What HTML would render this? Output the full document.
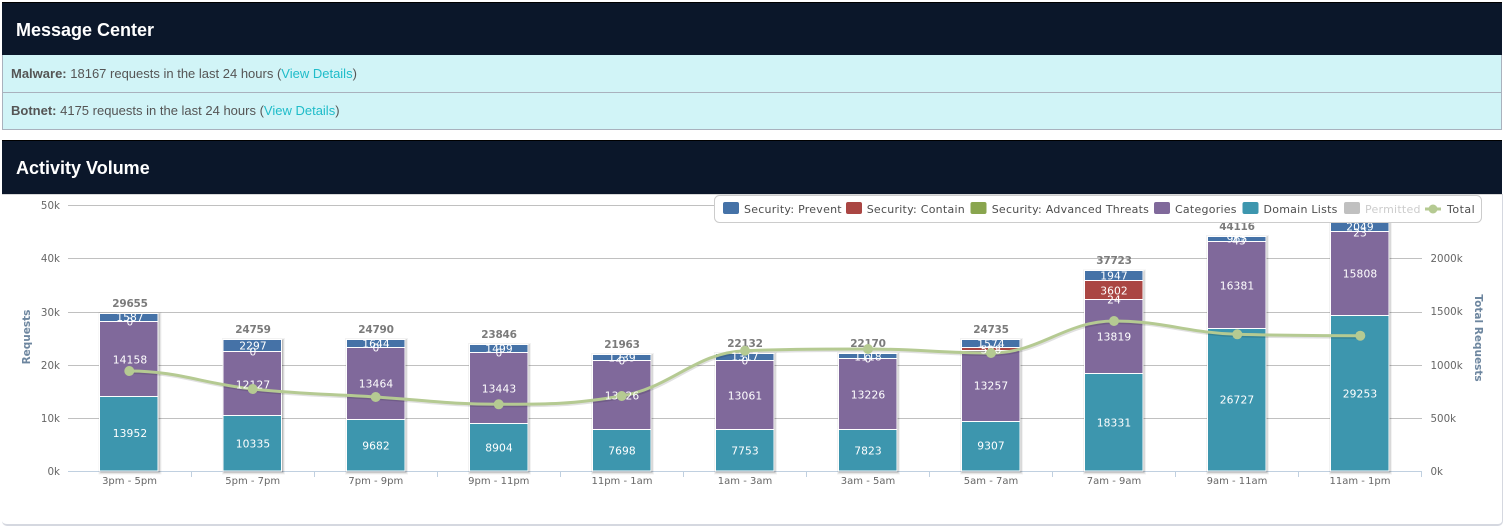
<!DOCTYPE html>
<html lang="en"><head><meta charset="utf-8"><title>Dashboard</title>
<style>
html,body{margin:0;padding:0;background:#fff;width:1504px;height:531px;overflow:hidden;font-family:"Liberation Sans",Arial,sans-serif}
.a{position:absolute;box-sizing:border-box}
.head{left:2px;width:1500px;background:#0b172a;color:#fff;font-weight:bold;font-size:18px;padding-left:14px;border-top:1px solid #000}
.row{left:2px;width:1500px;background:#d1f4f7;color:#555;font-size:13px;padding-left:8px;border-left:1px solid #a9b1bd;border-right:1px solid #a9b1bd;border-bottom:1px solid #a9b1bd}
.row a{color:#1fbcc9;text-decoration:none}
svg{position:absolute;left:0;top:0}
svg text{font-family:"DejaVu Sans",sans-serif}
.d text{fill:#fff;font-size:10.7px;letter-spacing:.1px;text-anchor:middle;dominant-baseline:central}
.t text{fill:#7b7b7b;font-size:10.5px;letter-spacing:-.2px;font-weight:bold;text-anchor:middle;dominant-baseline:central}
.x text{fill:#666;font-size:10px;text-anchor:middle;dominant-baseline:central}
.yl text{fill:#666;font-size:10.3px;text-anchor:end;dominant-baseline:central}
.yr text{fill:#666;font-size:10.3px;dominant-baseline:central}
.l text{fill:#4d4d4d;font-size:11px;letter-spacing:.25px;dominant-baseline:central}
.s rect{stroke:#fff;stroke-width:1}
</style></head><body>
<div class="a head" style="top:2px;height:53px;line-height:55px">Message Center</div>
<div class="a row" style="top:55px;height:38px;line-height:37px"><b>Malware:</b> 18167 requests in the last 24 hours (<a href="#">View Details</a>)</div>
<div class="a row" style="top:93px;height:37px;line-height:35px"><b>Botnet:</b> 4175 requests in the last 24 hours (<a href="#">View Details</a>)</div>
<div class="a" style="left:2px;top:194px;width:1501px;height:332px;border-right:1px solid #d5d8e0;border-bottom:2px solid #d5d8e0;border-radius:0 0 5px 5px;border-top:1px solid #d8d8d8"></div>
<div class="a head" style="top:140px;height:54px;line-height:54px">Activity Volume</div>
<svg width="1504" height="531" viewBox="0 0 1504 531" xmlns="http://www.w3.org/2000/svg">
<g stroke="#c0c0c0" stroke-width="1" fill="none">
<path d="M68 205.5H1422M68 258.5H1422M68 312.5H1422M68 365.5H1422M68 418.5H1422"/>
</g>
<path d="M68 471.5H1422M191.500 471V477M314.500 471V477M437.500 471V477M560.500 471V477M683.500 471V477M806.500 471V477M929.500 471V477M1052.500 471V477M1175.500 471V477M1298.500 471V477M1421.500 471V477" stroke="#c0d0e0" fill="none"/>
<g class="yl" transform="translate(0 .8)"><text x="60" y="205">50k</text><text x="60" y="258">40k</text><text x="60" y="312">30k</text><text x="60" y="365">20k</text><text x="60" y="418">10k</text><text x="60" y="471">0k</text></g>
<g class="yr" transform="translate(0 .8)"><text x="1430.500" y="258">2000k</text><text x="1430.500" y="311">1500k</text><text x="1430.500" y="365">1000k</text><text x="1430.500" y="418">500k</text><text x="1430.500" y="471">0k</text></g>
<text transform="translate(27 337) rotate(-90)" text-anchor="middle" dominant-baseline="central" style="font-size:10.5px;font-weight:bold;fill:#6d869f">Requests</text>
<text transform="translate(1478 338) rotate(90)" text-anchor="middle" dominant-baseline="central" style="font-size:10.5px;font-weight:bold;fill:#6d869f">Total Requests</text>
<defs><path id="sh" d="M100 313.500h58v157.500h-58zM223.500 339.500h58v131.500h-58zM346.500 339.500h58v131.500h-58zM469.500 344.500h58v126.500h-58zM592.500 354.500h58v116.500h-58zM715.500 353.500h58v117.500h-58zM838.500 353.500h58v117.500h-58zM961.500 339.500h58v131.500h-58zM1084.500 271h58v200h-58zM1207.500 236.500h58v234.500h-58zM1330.500 220h58v251h-58z"/>
<path id="ln" d="M129.300 371C178.500 371 203.500 383.800 252.700 389C301.900 394.200 326.500 393.900 375.700 397C424.900 400.100 449.500 404.300 498.700 404.300C547.900 404.300 572.500 404.300 621.700 396C670.900 387.700 695.800 352.400 745 350.700C794.200 349 818.800 349 868 349C917.200 349 941.800 353 991 353C1040.200 353 1064.800 321 1114 321C1163.200 321 1188.100 332.900 1237.300 334.300C1286.500 335.700 1311.100 335.700 1360.300 335.700"/></defs>
<g fill="none" stroke="#000" transform="translate(1 1)"><use href="#sh" stroke-width="5" stroke-opacity=".05"/><use href="#sh" stroke-width="3" stroke-opacity=".1"/><use href="#sh" stroke-width="1" stroke-opacity=".15"/></g>
<g class="s">
<g fill="#3d96ae"><rect x="99.500" y="396.500" width="58.500" height="74.500"/><rect x="223" y="415.500" width="58.500" height="55.500"/><rect x="346.500" y="419.500" width="58.500" height="51.500"/><rect x="469.500" y="423.500" width="58.500" height="47.500"/><rect x="592.500" y="429.500" width="58.500" height="41.500"/><rect x="715.500" y="429.500" width="58.500" height="41.500"/><rect x="838.500" y="429.500" width="58.500" height="41.500"/><rect x="961.500" y="421.500" width="58.500" height="49.500"/><rect x="1084.500" y="373.500" width="58.500" height="97.500"/><rect x="1207.500" y="328.500" width="58.500" height="142.500"/><rect x="1330.500" y="315.500" width="58.500" height="155.500"/></g>
<g fill="#80699b"><rect x="99.500" y="321.500" width="58.500" height="75"/><rect x="223" y="351.500" width="58.500" height="64"/><rect x="346.500" y="347.500" width="58.500" height="72"/><rect x="469.500" y="352.500" width="58.500" height="71"/><rect x="592.500" y="360.500" width="58.500" height="69"/><rect x="715.500" y="360.500" width="58.500" height="69"/><rect x="838.500" y="358.500" width="58.500" height="71"/><rect x="961.500" y="350.500" width="58.500" height="71"/><rect x="1084.500" y="299.500" width="58.500" height="74"/><rect x="1207.500" y="241.500" width="58.500" height="87"/><rect x="1330.500" y="231.500" width="58.500" height="84"/></g>
<g fill="#aa4643"><rect x="961.500" y="347.500" width="58.500" height="3"/><rect x="1084.500" y="280.500" width="58.500" height="19"/></g>
<g fill="#4572a7"><rect x="99.500" y="313.500" width="58.500" height="8"/><rect x="223" y="339.500" width="58.500" height="12"/><rect x="346.500" y="339.500" width="58.500" height="8"/><rect x="469.500" y="344.500" width="58.500" height="8"/><rect x="592.500" y="354.500" width="58.500" height="6"/><rect x="715.500" y="353.500" width="58.500" height="7"/><rect x="838.500" y="353.500" width="58.500" height="5"/><rect x="961.500" y="339.500" width="58.500" height="8"/><rect x="1084.500" y="270.500" width="58.500" height="10"/><rect x="1207.500" y="236.500" width="58.500" height="5"/><rect x="1330.500" y="220.500" width="58.500" height="11"/></g>
</g>
<use href="#ln" fill="none" stroke="#000" stroke-opacity=".12" stroke-width="4" transform="translate(1 1)"/>
<use href="#ln" fill="none" stroke="#b5ca92" stroke-width="3"/>
<g class="d">
<text x="130" y="433.500">13952</text><text x="130" y="360">14158</text><text x="130" y="317.500">1587</text><text x="130" y="322">0</text>
<text x="253" y="444">10335</text><text x="253" y="385">12127</text><text x="253" y="346">2297</text><text x="253" y="352">0</text>
<text x="376" y="446">9682</text><text x="376" y="384">13464</text><text x="376" y="344">1644</text><text x="376" y="348">0</text>
<text x="499" y="448">8904</text><text x="499" y="389">13443</text><text x="499" y="349">1499</text><text x="499" y="353">0</text>
<text x="622" y="451">7698</text><text x="622" y="396">13026</text><text x="622" y="358">1239</text><text x="622" y="361">0</text>
<text x="745" y="451">7753</text><text x="745" y="396">13061</text><text x="745" y="357">1317</text><text x="745" y="361">0</text>
<text x="868" y="451">7823</text><text x="868" y="395">13226</text><text x="868" y="357">1118</text><text x="868" y="359">0</text>
<text x="991" y="446">9307</text><text x="991" y="386">13257</text><text x="991" y="344">1574</text><text x="991" y="350">598</text><text x="991" y="351">0</text>
<text x="1114" y="423">18331</text><text x="1114" y="337">13819</text><text x="1114" y="300">24</text><text x="1114" y="291">3602</text><text x="1114" y="276">1947</text>
<text x="1237" y="400">26727</text><text x="1237" y="286">16381</text><text x="1237" y="239">965</text><text x="1239" y="241">43</text>
<text x="1360" y="394">29253</text><text x="1360" y="274">15808</text><text x="1360" y="227">2049</text><text x="1360" y="233">23</text>
</g>
<g class="t" transform="translate(0 .8)"><text x="130" y="303">29655</text><text x="253" y="329">24759</text><text x="376" y="329">24790</text><text x="499" y="334">23846</text><text x="622" y="344">21963</text><text x="745" y="343">22132</text><text x="868" y="343">22170</text><text x="991" y="329">24735</text><text x="1114" y="260">37723</text><text x="1237" y="226">44116</text></g>
<g fill="#b5ca92"><circle cx="129.300" cy="371" r="5"/><circle cx="252.700" cy="389" r="5"/><circle cx="375.700" cy="397" r="5"/><circle cx="498.700" cy="404.300" r="5"/><circle cx="621.700" cy="396" r="5"/><circle cx="745" cy="350.700" r="5"/><circle cx="868" cy="349" r="5"/><circle cx="991" cy="353" r="5"/><circle cx="1114" cy="321" r="5"/><circle cx="1237.300" cy="334.300" r="5"/><circle cx="1360.300" cy="335.700" r="5"/></g>
<g class="x"><text x="129.500" y="481.500">3pm - 5pm</text><text x="252.700" y="481.500">5pm - 7pm</text><text x="375.800" y="481.500">7pm - 9pm</text><text x="498.800" y="481.500">9pm - 11pm</text><text x="622" y="481.500">11pm - 1am</text><text x="745" y="481.500">1am - 3am</text><text x="868" y="481.500">3am - 5am</text><text x="991" y="481.500">5am - 7am</text><text x="1114" y="481.500">7am - 9am</text><text x="1237" y="481.500">9am - 11am</text><text x="1360" y="481.500">11am - 1pm</text></g>
<rect x="714.500" y="195.500" width="767" height="27" rx="5" fill="#fff" stroke="#ccc"/>
<g>
<rect x="723" y="202" width="16" height="12" rx="2" fill="#4572a7"/><rect x="846" y="202" width="16" height="12" rx="2" fill="#aa4643"/><rect x="970.500" y="202" width="16" height="12" rx="2" fill="#89a54e"/><rect x="1154" y="202" width="16" height="12" rx="2" fill="#80699b"/><rect x="1242.500" y="202" width="16" height="12" rx="2" fill="#3d96ae"/><rect x="1344" y="202" width="16" height="12" rx="2" fill="#c0c0c0"/>
<path d="M1425 209H1441" stroke="#b5ca92" stroke-width="3"/><circle cx="1433" cy="209" r="4.500" fill="#b5ca92"/>
</g>
<g class="l" transform="translate(0 .5)"><text x="744" y="209">Security: Prevent</text><text x="866.700" y="209">Security: Contain</text><text x="991.700" y="209">Security: Advanced Threats</text><text x="1175" y="209">Categories</text><text x="1263.500" y="209">Domain Lists</text><text x="1365" y="209" style="fill:#ccc">Permitted</text><text x="1447" y="209" style="letter-spacing:.5px">Total</text></g>
</svg>
</body></html>
